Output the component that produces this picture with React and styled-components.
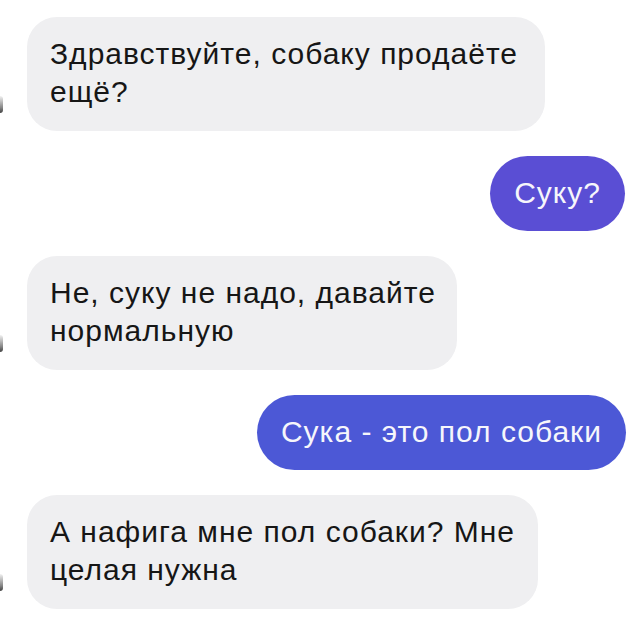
import React from "react";
import styled, { createGlobalStyle } from "styled-components";

const Global = createGlobalStyle`
  html, body { margin: 0; padding: 0; background: #ffffff; }
  body { font-family: "Liberation Sans", Arial, sans-serif; }
`;

const Chat = styled.div`
  width: 640px;
  height: 629px;
  box-sizing: border-box;
  padding: 17px 14px 0 0;
  display: flex;
  flex-direction: column;
  gap: 25px;
  overflow: hidden;
  background: #ffffff;
`;

const IncomingRow = styled.div`
  display: flex;
  align-items: flex-end;
  gap: 24px;
`;

const Avatar = styled.div`
  width: 3px;
  height: 17px;
  margin-bottom: 18px;
  border-radius: 0 8px 8px 0;
  background: linear-gradient(180deg, rgba(80,80,80,0.08) 0%, rgba(50,50,50,0.6) 70%, rgba(30,30,30,0.85) 100%);
`;

const Incoming = styled.div`
  box-sizing: border-box;
  width: ${(p) => p.$w}px;
  background: #efeff1;
  border-radius: 30px;
  padding: 18px 16px 20px 23px;
  color: #161616;
  font-size: 30px;
  line-height: 38px;
  letter-spacing: 1px;
`;

const Outgoing = styled.div`
  align-self: flex-end;
  margin-right: ${(p) => p.$mr || 0}px;
  background: ${(p) => p.$bg};
  border-radius: 40px;
  padding: 18px 24px 19px 24px;
  color: #f6f6fb;
  font-size: 30px;
  line-height: 38px;
  letter-spacing: 1px;
  white-space: nowrap;
`;

export default function App() {
  return (
    <>
      <Global />
      <Chat>
        <IncomingRow>
          <Avatar />
          <Incoming $w={518}>
            Здравствуйте, собаку продаёте
            <br />
            ещё?
          </Incoming>
        </IncomingRow>
        <Outgoing $bg="#5a4ed4" $mr={1}>Суку?</Outgoing>
        <IncomingRow>
          <Avatar />
          <Incoming $w={430}>
            Не, суку не надо, давайте
            <br />
            нормальную
          </Incoming>
        </IncomingRow>
        <Outgoing $bg="#4c58d6">Сука - это пол собаки</Outgoing>
        <IncomingRow>
          <Avatar />
          <Incoming $w={511}>
            А нафига мне пол собаки? Мне
            <br />
            целая нужна
          </Incoming>
        </IncomingRow>
      </Chat>
    </>
  );
}
